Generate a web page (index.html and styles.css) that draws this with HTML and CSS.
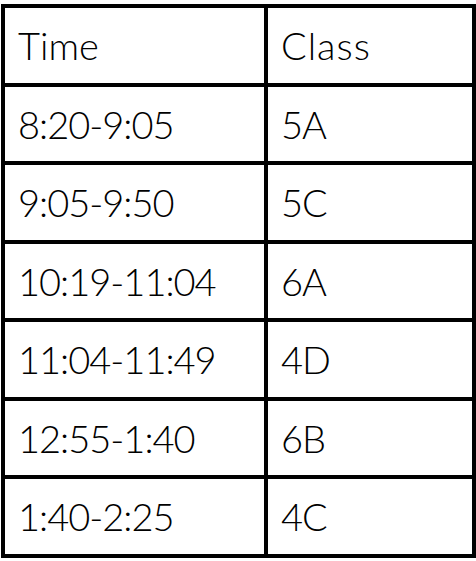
FILE: index.html
```html
<!DOCTYPE html>
<html>
<head>
<meta charset="utf-8">
<link rel="stylesheet" href="styles.css">
</head>
<body>
<table class="schedule">
  <tr class="head"><td class="c1">Time</td><td class="c2">Class</td></tr>
  <tr><td class="c1">8:20-9:05</td><td class="c2">5A</td></tr>
  <tr><td class="c1">9:05-9:50</td><td class="c2">5C</td></tr>
  <tr><td class="c1">10:19-11:04</td><td class="c2">6A</td></tr>
  <tr><td class="c1">11:04-11:49</td><td class="c2">4D</td></tr>
  <tr><td class="c1">12:55-1:40</td><td class="c2">6B</td></tr>
  <tr><td class="c1">1:40-2:25</td><td class="c2">4C</td></tr>
</table>
</body>
</html>
```
FILE: styles.css
```css
html, body {
  margin: 0;
  padding: 0;
  background: #fff;
}
body {
  padding: 4px 0 0 1px;
}
.schedule {
  border-collapse: separate;
  border-spacing: 0;
  table-layout: fixed;
  border-left: 4px solid #000;
  border-top: 4px solid #000;
  font-family: Lato, "DejaVu Sans", sans-serif;
  font-weight: 300;
  font-size: 38px;
  color: #000;
}
.schedule td {
  height: 78.5px;
  padding: 0 0 0 13px;
  border-right: 4px solid #000;
  border-bottom: 4px solid #000;
  box-sizing: border-box;
  vertical-align: middle;
  white-space: nowrap;
  line-height: 1;
  letter-spacing: -1px;
}
.schedule .head td {
  letter-spacing: 0;
}
.schedule .head .c2 {
  letter-spacing: 1px;
}
.c1 { width: 263px; }
.c2 { width: 208px; padding-left: 15px; }
```
